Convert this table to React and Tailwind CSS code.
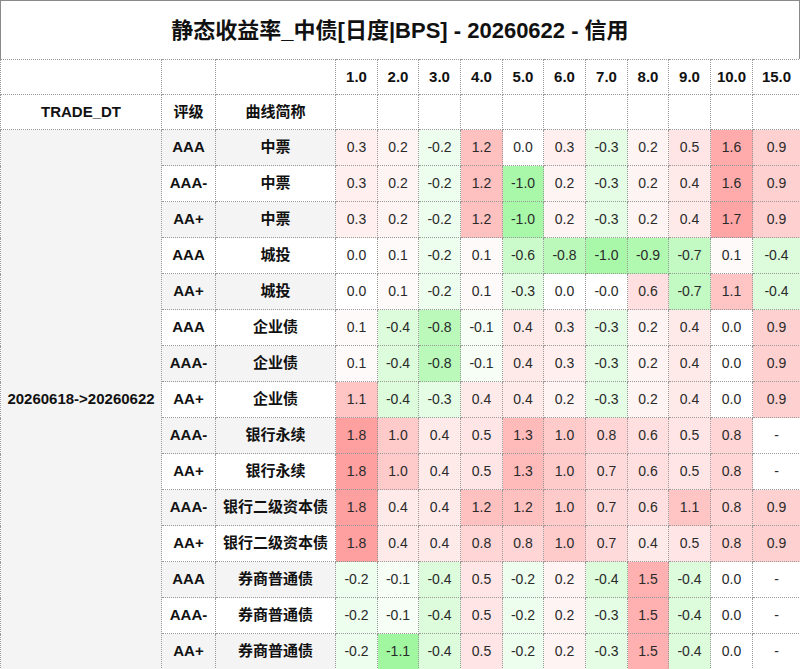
import React from "react";

const tenors = ["1.0", "2.0", "3.0", "4.0", "5.0", "6.0", "7.0", "8.0", "9.0", "10.0", "15.0"];
const tenorWidths = ["w-[42px]", "w-[41px]", "w-[42px]", "w-[42px]", "w-[41px]", "w-[42px]", "w-[42px]", "w-[41px]", "w-[42px]", "w-[42px]", "w-[48px]"];

const rows = [
  ["AAA", "中票", "0.3 0.2 -0.2 1.2 0.0 0.3 -0.3 0.2 0.5 1.6 0.9"],
  ["AAA-", "中票", "0.3 0.2 -0.2 1.2 -1.0 0.2 -0.3 0.2 0.4 1.6 0.9"],
  ["AA+", "中票", "0.3 0.2 -0.2 1.2 -1.0 0.2 -0.3 0.2 0.4 1.7 0.9"],
  ["AAA", "城投", "0.0 0.1 -0.2 0.1 -0.6 -0.8 -1.0 -0.9 -0.7 0.1 -0.4"],
  ["AA+", "城投", "0.0 0.1 -0.2 0.1 -0.3 0.0 -0.0 0.6 -0.7 1.1 -0.4"],
  ["AAA", "企业债", "0.1 -0.4 -0.8 -0.1 0.4 0.3 -0.3 0.2 0.4 0.0 0.9"],
  ["AAA-", "企业债", "0.1 -0.4 -0.8 -0.1 0.4 0.3 -0.3 0.2 0.4 0.0 0.9"],
  ["AA+", "企业债", "1.1 -0.4 -0.3 0.4 0.4 0.2 -0.3 0.2 0.4 0.0 0.9"],
  ["AAA-", "银行永续", "1.8 1.0 0.4 0.5 1.3 1.0 0.8 0.6 0.5 0.8 -"],
  ["AA+", "银行永续", "1.8 1.0 0.4 0.5 1.3 1.0 0.7 0.6 0.5 0.8 -"],
  ["AAA-", "银行二级资本债", "1.8 0.4 0.4 1.2 1.2 1.0 0.7 0.6 1.1 0.8 0.9"],
  ["AA+", "银行二级资本债", "1.8 0.4 0.4 0.8 0.8 1.0 0.7 0.4 0.5 0.8 0.9"],
  ["AAA", "券商普通债", "-0.2 -0.1 -0.4 0.5 -0.2 0.2 -0.4 1.5 -0.4 0.0 -"],
  ["AAA-", "券商普通债", "-0.2 -0.1 -0.4 0.5 -0.2 0.2 -0.3 1.5 -0.4 0.0 -"],
  ["AA+", "券商普通债", "-0.2 -1.1 -0.4 0.5 -0.2 0.2 -0.3 1.5 -0.4 0.0 -"],
];

// red for up, green for down, white at zero
const cellColor = (s) => {
  const v = parseFloat(s);
  if (isNaN(v) || v === 0) return "#ffffff";
  if (v > 0) {
    const t = Math.min(v / 1.8, 1);
    const c = Math.round(255 - 95 * t);
    return `rgb(255,${c},${c})`;
  }
  const t = Math.min(-v / 1.1, 1);
  const c = Math.round(255 - 95 * t);
  const g = Math.round(255 - 8 * t);
  return `rgb(${c},${g},${c})`;
};

const cell = "border border-dotted border-[#9a9a9a] text-center p-0";

export default function App() {
  return (
    <div className="w-[800px] h-[669px] overflow-hidden bg-white font-['Liberation_Sans','Noto_Sans_CJK_SC',sans-serif] text-[#111]">
      <div className="h-[59px] border-t border-l border-r border-[#8a8a8a] flex items-center justify-center text-[22px] font-bold">
        静态收益率_中债[日度|BPS] - 20260622 - 信用
      </div>
      <table className="w-[800px] table-fixed border-collapse text-[14px]">
        <colgroup>
          <col className="w-[161px]" />
          <col className="w-[54px]" />
          <col className="w-[120px]" />
          {tenorWidths.map((w, i) => (
            <col key={i} className={w} />
          ))}
        </colgroup>
        <thead>
          <tr className="h-[35px] font-bold text-[15px]">
            <td className={cell}></td>
            <td className={cell}></td>
            <td className={cell}></td>
            {tenors.map((t) => (
              <td key={t} className={cell}>
                {t}
              </td>
            ))}
          </tr>
          <tr className="h-[35px] font-bold text-[15px]">
            <td className={cell}>TRADE_DT</td>
            <td className={cell}>评级</td>
            <td className={cell}>曲线简称</td>
            {tenors.map((t) => (
              <td key={t} className={cell}></td>
            ))}
          </tr>
        </thead>
        <tbody>
          {rows.map(([rating, curve, vals], i) => {
            const shade = i % 2 === 0 ? "bg-[#f4f4f4]" : "bg-white";
            return (
              <tr key={i} className="h-[36px]">
                {i === 0 && (
                  <td rowSpan={15} className={`${cell} bg-[#f4f4f4] font-bold text-[15px]`}>
                    20260618-&gt;20260622
                  </td>
                )}
                <td className={`${cell} ${shade} font-bold text-[15px]`}>{rating}</td>
                <td className={`${cell} ${shade} font-bold text-[15px]`}>{curve}</td>
                {vals.split(" ").map((v, j) => (
                  <td
                    key={j}
                    className={`${cell} text-[#2a2a2a]`}
                    style={{ backgroundColor: cellColor(v) }}
                  >
                    {v}
                  </td>
                ))}
              </tr>
            );
          })}
        </tbody>
      </table>
    </div>
  );
}
